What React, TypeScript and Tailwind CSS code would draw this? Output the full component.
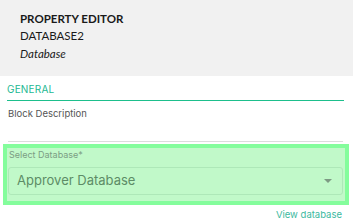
export default function App() {
  return (
    <div className="w-[353px] h-[221px] bg-white overflow-hidden font-['Inter',sans-serif]">
      {/* header */}
      <div className="h-[76px] bg-[#f1f1f1] pl-[20px] pt-[12px] font-['Lato',sans-serif] text-[#1a1a1a]">
        <div className="text-[11.5px] font-bold leading-[14px]">PROPERTY EDITOR</div>
        <div className="text-[11.5px] leading-[14px] mt-[3px]">DATABASE2</div>
        <div className="text-[11.5px] italic leading-[14px] mt-[4px]">Database</div>
      </div>

      {/* general section */}
      <div className="px-[7px] pt-[6px]">
        <div className="text-[10px] leading-[14px] tracking-[0.02em] text-[#22b892] pb-[4px] border-b border-[#1dbf8c] w-[337px]">
          GENERAL
        </div>
        <div className="pl-[1px] pt-[6px] text-[9.5px] leading-[14px] text-[#555]">Block Description</div>
        <div className="mt-[20px] ml-[1px] h-[1px] w-[335px] bg-[#dcdcdc]" />
      </div>

      {/* highlighted field */}
      <div className="ml-[3px] mt-[2px] w-[346px] h-[61px] border-4 border-[#84fd9c] bg-[#c1f9c9] pl-[1px] pr-[2px] pt-[1px]">
        <div className="text-[9px] leading-[12px] text-[#7c9d84] ml-[1px]">Select Database*</div>
        <div className="mt-[6px] h-[28px] rounded-[3px] border border-[#aee8b8] flex items-center justify-between pl-[8px] pr-[8px]">
          <span className="text-[13px] text-[#5d8c66]">Approver Database</span>
          <svg width="10" height="6" viewBox="0 0 10 6" className="mr-[1px]">
            <path d="M1 1h8L5 5z" fill="#7e9a84" />
          </svg>
        </div>
      </div>

      <div className="flex justify-end pr-[11px] pt-[3px]">
        <span className="text-[9.5px] leading-[14px] text-[#3bb9a0]">View database</span>
      </div>
    </div>
  );
}
